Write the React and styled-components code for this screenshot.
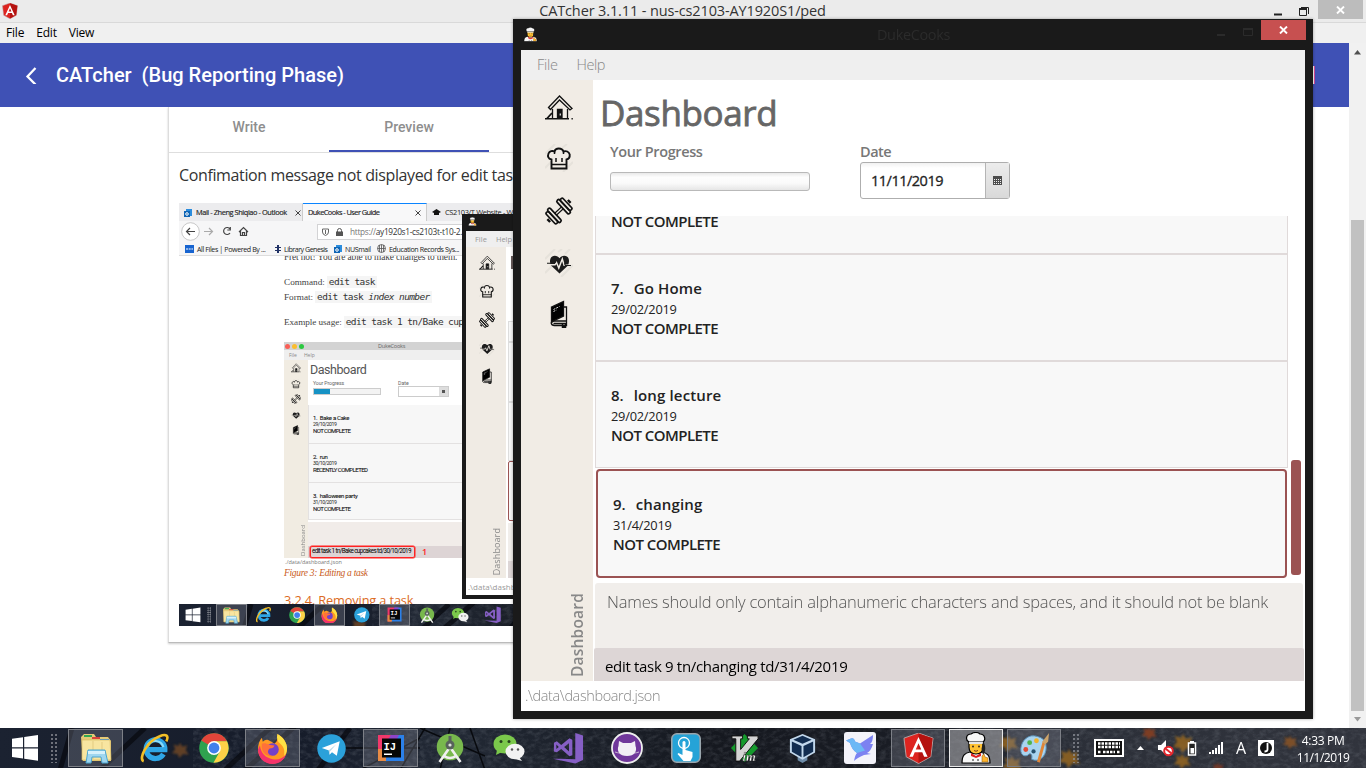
import React from 'react';
import styled, { createGlobalStyle, css } from 'styled-components';

const Global = createGlobalStyle`
  * { box-sizing: border-box; }
  body { margin: 0; overflow: hidden; background: #fff; }
  svg { display: block; flex: none; }
`;

const sans = "'Open Sans', 'Noto Sans', sans-serif";
const roboto = 'Roboto, sans-serif';
const serif = "'Liberation Serif', serif";

const Text = styled.span`
  display: block;
  white-space: pre;
  font-family: ${(p) => p.$font || sans};
  font-size: ${(p) => p.$size}px;
  font-weight: ${(p) => p.$weight || 400};
  font-style: ${(p) => p.$style || 'normal'};
  letter-spacing: ${(p) => p.$track || 0}px;
  line-height: ${(p) => p.$line || 20}px;
  color: ${(p) => p.$color || '#222'};
  -webkit-text-stroke: ${(p) => p.$stroke || 0}px currentColor;
  margin-left: ${(p) => p.$left || 0}px;
`;

/* ---------- icons ---------- */

const HouseIcon = ({ size = 28 }) => (
  <svg width={size} height={size} viewBox="0 0 28 28" fill="none" stroke="#111" strokeWidth="1.3">
    <path d="M3.500 13.500 14.500 2 27 14.500 25 16 14.500 6 5.500 15.500z" />
    <path d="M7.500 15v9.500M22.500 15v9.500" />
    <path d="M0 24.800h24M26.500 24.800h1.300" strokeWidth="1.6" />
    <path d="M12.500 24V15.500h4.500V24z" fill="#111" />
    <path d="M2 24.500l5-5.500" strokeWidth="1.800" />
    <path d="M15.300 19.500v2" stroke="#ddd" />
  </svg>
);

const HatIcon = ({ size = 28 }) => (
  <svg width={size} height={size} viewBox="0 0 28 28" fill="none">
    <path d="M0 10 10 0M0 24 7 17M18 28 28 18M17 4l5-4" stroke="#e6e2db" strokeWidth="2" />
    <path d="M6.500 24.500v-9C3 15 2.500 12 3.500 9.500 4.500 7 7.500 6.500 9.500 7.500 10.500 3.500 17 3.500 18.500 7.500 21 6.500 24 7.500 24.700 10.500 25 13.500 23.500 15 21.500 15.500v9z" stroke="#111" strokeWidth="1.9" />
    <path d="M6.500 20.500h15M11 14v4M17 14v4M9.500 7.500v2.500M18.500 7.500v2.500" stroke="#111" strokeWidth="1.5" />
  </svg>
);

const DumbbellIcon = ({ size = 28 }) => (
  <svg width={size} height={size} viewBox="0 0 28 28" fill="none" stroke="#111" strokeWidth="1.700">
    <g transform="rotate(-43 14 14)">
      <path d="M9 12.700h10M9 15.300h10" strokeWidth="1.300" />
      <rect x="6" y="5" width="3.400" height="18" rx="1.500" />
      <rect x="2.500" y="6.500" width="3.400" height="15" rx="1.500" />
      <rect x="18.600" y="5" width="3.400" height="18" rx="1.500" />
      <rect x="22.100" y="6.500" width="3.400" height="15" rx="1.500" />
      <path d="M0 12v4M28 12v4" strokeWidth="2.400" />
    </g>
  </svg>
);

const HeartIcon = ({ size = 28 }) => (
  <svg width={size} height={size} viewBox="0 0 28 28" fill="none">
    <path d="M0 10 10 0M0 24 7 17M13 3l4-3M16 28 28 16M20 5l5-5" stroke="#e6e2db" strokeWidth="2" />
    <path d="M14.500 24.500 6 16.500C3.500 11 6 6.800 9.800 6.800c2 0 3.700 1 4.700 2.400C15.500 7.800 17.200 6.800 19.300 6.800c4 0 6.200 4.200 3.700 9.700z" fill="#1c1c1c" />
    <path d="M4 15.800h6l1.500-2.300 2.300 5.500 3.500-9 1.800 6.300h5.500" stroke="#f1ece5" strokeWidth="1.500" />
    <path d="M2 14.300h7.500l1.500-2M19.500 14.300l.8 2.200H26" stroke="#1c1c1c" strokeWidth="1.100" />
  </svg>
);

const BookIcon = ({ size = 28 }) => (
  <svg width={size} height={size} viewBox="0 0 28 28" fill="none" stroke="#111" strokeWidth="1.300">
    <path d="M6.500 7 18.500 1.500v14.500L8.500 21 6.500 22.500z" fill="#000" />
    <path d="M18.500 7H21.500v18.500H9.500c-4 0-4-4-1-4.500h13M8.500 23.500h13" />
    <path d="M17.500 23v5l1.500-1.500 1.500 1.500v-5" strokeWidth="1.500" />
    <path d="M8.500 9.500l6-3M8.500 11.500l3-1.500" stroke="#ddd" strokeDasharray="2 1" strokeWidth="1" />
  </svg>
);

const AngularIcon = ({ size = 32 }) => (
  <svg width={size} height={size} viewBox="0 0 32 32">
    <path d="M16 0 31 5.300 28.700 24.500 16 31.500 3.300 24.500 1 5.300z" fill="#dd2420" stroke="#b9a3a3" strokeWidth="1" />
    <path d="M16 .5 30.500 5.500 28.300 24.200 16 31z" fill="#b5120f" />
    <path d="M16 4 6.600 24.500h3.600l1.900-4.600h7.800l1.900 4.600h3.600zM16 10.500l2.800 6.500h-5.600z" fill="#fff" fillRule="evenodd" />
  </svg>
);

const ChefIcon = ({ size = 32 }) => (
  <svg width={size} height={size} viewBox="0 0 32 32">
    <g stroke="#000" strokeWidth="1.200">
      <path d="M2 31c0-8 3-10 8-11h12c5 1 8 3 8 11z" fill="#f8f8f8" />
      <path d="M9 9h14v6c0 5-3 7-7 7s-7-2-7-7z" fill="#ffc233" />
      <path d="M9 10C5 8 6 2 11 2c3-2 7-2 9 0 5 0 6 6 3 8z" fill="#f7f7f7" />
    </g>
    <path d="M9 10h14v2H9z" fill="#e6e6e6" />
    <path d="M23 10c3 3 3 9 0 13l-1.500-6z" fill="#222" />
    <circle cx="13" cy="14.500" r="1" fill="#3b2b20" /><circle cx="19" cy="14.500" r="1" fill="#3b2b20" />
    <path d="M14 18.500q2 1.500 4 0" stroke="#7a3b1a" fill="none" />
    <path d="M11 21l5 3 5-3v3l-5 2-5-2z" fill="#e02020" />
    <circle cx="13" cy="28" r=".8" /><circle cx="18" cy="28" r=".8" />
    <path d="M22 24l2-2 1 3 3 1v4h-6z" fill="#ffb52e" stroke="#8a5a10" strokeWidth=".5" />
  </svg>
);

const WindowsIcon = ({ size = 28 }) => (
  <svg width={size} height={size} viewBox="0 0 28 28" fill="#fff">
    <path d="M1 4.800 12 3.200V13.200H1zM13.200 3 27 1V13.200H13.200zM1 14.600H12V24.600L1 23zM13.200 14.600H27V26.800L13.200 24.800z" />
  </svg>
);

const ExplorerIcon = ({ size = 34 }) => (
  <svg width={size} height={size} viewBox="0 0 34 34">
    <path d="M2 6l3-3h10l2 3h12l3 4v20H4z" fill="#e5ca76" />
    <rect x="5" y="4" width="8" height="2" fill="#33a852" /><rect x="13" y="6" width="8" height="2" fill="#d9453d" /><rect x="21" y="8" width="9" height="2" fill="#2f87dc" />
    <path d="M3 9h28l1 20H3z" fill="#f8e5a0" stroke="#d8bb66" strokeWidth=".7" />
    <path d="M14 10v18M23 11v17" stroke="#e3cb81" />
    <path d="M7 32l2-13h17l3 13h-6l-1-6H13l-1 6z" fill="#9fd6ef" stroke="#4ba5cf" strokeWidth="1" />
    <path d="M9 20h17v3H9z" fill="#d6f1fb" />
  </svg>
);

const IeIcon = ({ size = 34 }) => (
  <svg width={size} height={size} viewBox="0 0 34 34" fill="none">
    <path d="M9 18.800h18.500A10 10 0 1 0 26 23.500" stroke="#2fa6e6" strokeWidth="5.500" />
    <path d="M26 16A9.500 9.500 0 0 0 9 14" stroke="#8bdcfa" strokeWidth="2.200" />
    <path d="M5 31C-1 29 8 10 22 4.500 29 1.500 32 4 29 10" stroke="#f3bf27" strokeWidth="2.800" />
  </svg>
);

const ChromeIcon = ({ size = 30 }) => (
  <svg width={size} height={size} viewBox="0 0 30 30">
    <circle cx="15" cy="15" r="14.800" fill="#2fa24f" />
    <path d="M15 15 2.200 7.500A14.800 14.800 0 0 1 28 8.300H15z" fill="#e2453a" />
    <path d="M15 15V8.300H28A14.800 14.800 0 0 1 14.500 29.800L21 18z" fill="#fdd147" />
    <circle cx="15" cy="15" r="6.900" fill="#fff" /><circle cx="15" cy="15" r="5.400" fill="#4280ec" />
  </svg>
);

const FirefoxIcon = ({ size = 32 }) => (
  <svg width={size} height={size} viewBox="0 0 32 32">
    <path d="M21 1c6 3 10 9 10 15a15 15 0 0 1-30 1c0-5 1.500-9 4-12l1 4c2-2 4-2 5-2l4 2 3 2c3-2 4-6 3-10z" fill="#ff9a22" />
    <path d="M21 1c6 3 10 9 10 15 0 4-2 7-3 8 1-8-1-10-4-13-3-2-4-6-3-10z" fill="#ffe144" />
    <path d="M1 17c0 8 6 15 15 15 7 0 12-4 14-10-4 5-9 6-14 5-7-1-12-6-13-14z" fill="#f4336b" />
    <circle cx="16" cy="17" r="6.500" fill="#7440c9" />
    <path d="M5 11c3-1 5 0 7 1l6 1c-1 3-3 3-5 3-3 3-2 6 3 8-7 0-12-4-11-13z" fill="#ff7139" />
  </svg>
);

const TelegramIcon = ({ size = 29 }) => (
  <svg width={size} height={size} viewBox="0 0 30 30">
    <circle cx="15" cy="15" r="14.700" fill="#2ba1da" />
    <path d="M5 14.500 23.500 7.500 20.500 22.500 15.500 18.800 13 21.500 12.400 17z" fill="#fff" />
    <path d="M12 17 20 10.500 13.500 18 13 21.500z" fill="#b9d9ea" />
  </svg>
);

const IntellijIcon = ({ size = 28 }) => (
  <svg width={size} height={size} viewBox="0 0 28 28">
    <path d="M1 1h13L8 27H1z" fill="#f1386b" /><path d="M14 1h13v26H8z" fill="#2b80e9" /><path d="M1 15h8v12H1z" fill="#e78b45" /><path d="M14 1h8l-3 6h-9z" fill="#8e44c9" />
    <rect x="5" y="4.500" width="19" height="19" fill="#060606" />
    <text x="6.500" y="15.500" fontFamily="Liberation Mono, monospace" fontWeight="700" fontSize="10.500" fill="#fff">IJ</text>
    <rect x="7" y="19.500" width="8" height="1.500" fill="#fff" />
  </svg>
);

const StudioIcon = ({ size = 30 }) => (
  <svg width={size} height={size} viewBox="0 0 30 30" fill="none">
    <circle cx="15" cy="14" r="13.300" fill="#78b84d" />
    <path d="M4.500 29 15 14 25.500 29M9 23q6 4 12 0" stroke="#f0f0f0" strokeWidth="2.600" />
    <circle cx="15" cy="12" r="4.500" fill="#58625c" /><circle cx="15" cy="12" r="1.600" fill="#dfe6df" /><path d="M15 3v5" stroke="#58625c" strokeWidth="3" />
  </svg>
);

const WechatIcon = ({ size = 34 }) => (
  <svg width={size} height={size} viewBox="0 0 34 34">
    <ellipse cx="13" cy="13" rx="11.500" ry="9.500" fill="#7bc84b" /><path d="M5 19l-1 5 6-3z" fill="#7bc84b" />
    <ellipse cx="23" cy="20.500" rx="9.500" ry="7.800" fill="#f2f2f2" /><path d="M27 26l3 4-7-2z" fill="#f2f2f2" />
    <circle cx="9" cy="10.500" r="1.500" fill="#26401c" /><circle cx="17" cy="10.500" r="1.500" fill="#26401c" /><circle cx="20" cy="18.500" r="1.200" fill="#555" /><circle cx="26" cy="18.500" r="1.200" fill="#555" />
  </svg>
);

const VisualStudioIcon = ({ size = 33 }) => (
  <svg width={size} height={size} viewBox="0 0 33 33">
    <path d="M24 1 32 3.500V29L24 32.500 1 27.500 24 28z" fill="#865fc5" />
    <path d="M2 11l3-1.500 4.500 4 8.500-7 3 1.500v16l-3 1-8.500-7.500L5 21l-3-1zM4.500 13v4.500L7 15.500zM17.500 11.500 12.500 15.500l5 4.500z" fill="#865fc5" fillRule="evenodd" />
  </svg>
);

const GithubIcon = ({ size = 32 }) => (
  <svg width={size} height={size} viewBox="0 0 32 32">
    <circle cx="16" cy="16" r="15" fill="#70379b" stroke="#eee" strokeWidth="1.800" />
    <path d="M8 9l4 2h8l4-2 .5 5c2 5-1 10-8.500 10S5.500 19 7.500 14z" fill="#f2eef5" />
    <path d="M4 20q3 1 5 1M28 20q-3 1-5 1" stroke="#f2eef5" strokeWidth=".7" />
  </svg>
);

const TouchIcon = ({ size = 30 }) => (
  <svg width={size} height={size} viewBox="0 0 30 30">
    <rect x=".8" y=".8" width="28.400" height="28.400" rx="5" fill="#25a3d7" stroke="#9aa6ad" strokeWidth="1.600" />
    <circle cx="13" cy="10" r="5.500" fill="none" stroke="#fff" strokeWidth="1.300" />
    <path d="M11.500 9q1.500-2 3 0v8l7 2v5l-2 4h-7l-6-7 1-1 4 2z" fill="#fff" />
  </svg>
);

const VimIcon = ({ size = 32 }) => (
  <svg width={size} height={size} viewBox="0 0 32 32">
    <path d="M16 1 30 15.500 16 30 2 15.500z" fill="#159a2c" />
    <path d="M3 3h11v3h-2v11L21 6h-2V3h11v3L11 29H7V6H3z" fill="#d5d5d5" stroke="#111" strokeWidth="1" />
    <text x="14" y="29" fontFamily="Liberation Serif, serif" fontStyle="italic" fontWeight="700" fontSize="13" fill="#fff" stroke="#222" strokeWidth=".4">im</text>
  </svg>
);

const VboxIcon = ({ size = 32 }) => (
  <svg width={size} height={size} viewBox="0 0 32 32">
    <path d="M11 24h10v4l-5 3-5-3z" fill="#6d8ba8" />
    <path d="M16 1 29 6.500V20L16 27.500 3 20V6.500z" fill="#c2d8ec" />
    <path d="M16 2.800 25.500 7 16 11.200 6.500 7zM5 8.800l10 4.500V25L5 19.300zM27 8.800l-10 4.500V25l10-5.700z" fill="#122d50" />
  </svg>
);

const BirdIcon = ({ size = 32 }) => (
  <svg width={size} height={size} viewBox="0 0 32 32">
    <rect width="32" height="32" rx="3" fill="#f3f3fa" />
    <path d="M2 8.500 7 6.500q3-1 4 3l5 2L29 3q0 7-3 9h3q-2 7-6 9l4 1-7 1q-7 3-10 6 1-6 3-8-5-3-7-10z" fill="#7c82f1" />
    <path d="M2 8.500 7 6.500q3-1 4 3l5 2 5 7-8 2.500q-5-3-7-10z" fill="#6cb8f5" />
  </svg>
);

const PaintIcon = ({ size = 34 }) => (
  <svg width={size} height={size} viewBox="0 0 34 34">
    <path d="M17 4C8 3 2 12 3 20c1 6 7 5 8 3 3-2 4 2 3 5 8 4 15-3 15-12S23 5 17 4z" fill="#a9d4ef" stroke="#5d95bc" />
    <circle cx="8" cy="18" r="2.500" fill="#e24b35" /><circle cx="12" cy="11" r="2.500" fill="#4fb44d" /><circle cx="19" cy="9" r="2.500" fill="#f0b32c" /><circle cx="16" cy="20" r="2.200" fill="#26526f" />
    <path d="M21 31 27 10" stroke="#df8638" strokeWidth="3" /><path d="M25 10 32 1l-1 9-3 3z" fill="#cda46a" />
  </svg>
);

/* ---------- taskbar ---------- */

const Bar = styled.div`
  position: relative;
  z-index: 0;
  flex: none;
  height: ${(p) => p.$h}px;
  display: flex;
  align-items: center;
  overflow: hidden;
  background: linear-gradient(90deg, #1b2231 0%, #161c2a 22%, #222935 33%, #15181f 52%, #1a1d25 68%, #2b2f38 77%, #31343d 100%);
`;

const BarArt = styled.svg`
  position: absolute;
  inset: 0;
  z-index: -1;
  width: 1366px;
  height: 40px;
`;

const Leaf = ({ x, y, s = 1, c = '#94651f' }) => (
  <path transform={`translate(${x} ${y}) scale(${s})`} fill={c} opacity=".85" d="M0-9 3-4 9-6 7 0 11 6 4 5-1 10-3 5-10 4-6-1-8-7-2-5z" />
);

const Backdrop = () => (
  <BarArt viewBox="0 0 1366 40" fill="none">
    <filter id="rock"><feTurbulence type="fractalNoise" baseFrequency=".15 .25" numOctaves="4" seed="4" /><feColorMatrix values="0 0 0 0 .5  0 0 0 0 .54  0 0 0 0 .6  1.200 0 0 0 -.48" /></filter>
    <filter id="soft"><feGaussianBlur stdDeviation=".8" /></filter>
    <rect x="300" width="1066" height="40" filter="url(#rock)" opacity=".28" />
    <g stroke="#07090e" strokeWidth="5" opacity=".7"><path d="M100 42 145 0M225 42 270 0M245 42 300-6M60 42 72 0M318 42 350 0" /></g>
    <g stroke="#080a0e" strokeWidth="1.500"><path d="M345 20h75M400 42 425 0M440 42 450 0M470 0 485 42M360 42 420 10M420 0l65 28" /></g>
    <g filter="url(#soft)">
      <Leaf x={180} y={22} c="#6d4726" s=".8" />
      <Leaf x={1008} y={15} s=".9" /><Leaf x={1012} y={36} s=".9" /><Leaf x={1069} y={30} /><Leaf x={1149} y={5} s=".7" c="#8b3f22" /><Leaf x={1183} y={15} /><Leaf x={1182} y={33} s=".8" /><Leaf x={1290} y={14} s=".7" c="#8a5323" /><Leaf x={1218} y={40} s=".6" c="#7b3826" />
    </g>
  </BarArt>
);

const StartCell = styled.div`
  flex: none;
  width: ${(p) => p.$w}px;
  display: flex;
  justify-content: center;
`;

const Grip = styled.div`
  flex: none;
  width: ${(p) => p.$w}px;
  height: ${(p) => p.$h}px;
  margin-left: ${(p) => p.$left || 0}px;
  background: radial-gradient(circle, #8d9098 .6px, transparent 1px) 0 0 / ${(p) => p.$step}px ${(p) => p.$step}px;
`;

const Apps = styled.div`
  flex: none;
  display: flex;
  gap: ${(p) => p.$gap}px;
  margin-left: ${(p) => p.$left}px;
`;

const AppSlot = styled.div`
  flex: none;
  width: ${(p) => p.$w}px;
  height: ${(p) => p.$h}px;
  display: flex;
  align-items: center;
  justify-content: center;
  border: 1px solid ${(p) => (p.$state === 'active' ? '#e8e8e8' : p.$state ? '#7d8087' : 'transparent')};
  background: ${(p) => (p.$state === 'active' ? '#a8a9ac99' : p.$state ? '#8d92a04d' : 'none')};
`;

const apps = [
  [ExplorerIcon, 'open', 34], [IeIcon, '', 32], [ChromeIcon, '', 30], [FirefoxIcon, 'open', 31],
  [TelegramIcon, '', 29], [IntellijIcon, 'open', 28], [StudioIcon, '', 30], [WechatIcon, '', 34],
  [VisualStudioIcon, '', 32], [GithubIcon, '', 32], [TouchIcon, '', 30], [VimIcon, '', 31],
  [VboxIcon, '', 31], [BirdIcon, '', 32], [AngularIcon, 'open', 31], [ChefIcon, 'active', 32], [PaintIcon, 'open', 33],
];

const Tray = styled.div`
  flex: none;
  display: flex;
  align-items: center;
  margin-left: 14px;
  gap: 12px;
`;

const Clock = styled.div`
  width: 60px;
  margin-left: 7px;
  padding-top: 2px;
  display: flex;
  flex-direction: column;
  align-items: center;
`;

const Taskbar = () => (
  <Bar $h={40}>
    <Backdrop />
    <StartCell $w={50}><WindowsIcon /></StartCell>
    <Grip $w={8} $h={30} $step={4} />
    <Apps $gap={4} $left={10}>
      {apps.map(([Icon, state, size], i) => (
        <AppSlot key={i} $w={i > 10 ? 54 : 55} $h={38} $state={state}><Icon size={size} /></AppSlot>
      ))}
    </Apps>
    <Grip $w={8} $h={30} $step={4} $left={11} />
    <Tray>
      <svg width="30" height="18" viewBox="0 0 30 18"><rect x="1" y="1" width="28" height="16" fill="#111" stroke="#fff" strokeWidth="2" /><path d="M4 4.500h22M4 8h22M4 13h3M9 13h12M23 13h3" stroke="#fff" strokeWidth="2.500" strokeDasharray="2.500 1" /></svg>
      <svg width="9" height="6" viewBox="0 0 9 6"><path d="M1 5h7L4.500 1z" fill="#fff" /></svg>
      <svg width="18" height="18" viewBox="0 0 18 18"><path d="M1 6h3l5-5v15l-5-5H1z" fill="#fff" /><circle cx="11.500" cy="12" r="4.300" fill="#fff" stroke="#e4262c" strokeWidth="2" /><path d="M8.500 9.500l6 5" stroke="#e4262c" strokeWidth="2" /></svg>
      <svg width="10" height="16" viewBox="0 0 10 16"><rect x="1.500" y="3" width="7" height="12" fill="#222" stroke="#fff" strokeWidth="1.500" /><path d="M3 1h4v2H3zM3.500 8h3.500v5.500H3.500z" fill="#fff" /></svg>
      <svg width="15" height="13" viewBox="0 0 15 13" fill="#fff"><path d="M0 10h2v2H0zM3 8h2v4H3zM6 6h2v6H6zM9 3h2v9H9zM12 0h2v12h-2z" /></svg>
      <Text $size={16} $color="#fff" $line={22}>A</Text>
      <svg width="16" height="16" viewBox="0 0 16 16"><rect width="16" height="16" fill="#fff" /><circle cx="8" cy="8" r="6" fill="#111" /><path d="M9.500 3v6.500q0 2-3 2" stroke="#fff" strokeWidth="1.800" fill="none" /></svg>
      <Clock>
        <Text $size={12} $track={-0.3} $color="#fff" $line={17}>4:33 PM</Text>
        <Text $size={12} $track={-0.45} $color="#fff" $line={17}>11/1/2019</Text>
      </Clock>
    </Tray>
  </Bar>
);

/* ---------- CATcher window ---------- */

const Desktop = styled.div`
  position: relative;
  width: 1366px;
  height: 768px;
  overflow: hidden;
  display: flex;
  flex-direction: column;
  background: #fff;
`;

const TitleBar = styled.div`
  flex: none;
  height: 23px;
  display: flex;
  align-items: center;
  justify-content: space-between;
  background: #ebebeb;
  border-bottom: 1px solid #d9d9d9;
  padding: 0 3px 0 2px;
`;

const WindowControls = styled.div`
  display: flex;
  align-self: flex-start;
  align-items: center;
  gap: ${(p) => p.$gap}px;
`;

const CloseButton = styled.div`
  width: 45px;
  height: ${(p) => p.$h}px;
  display: flex;
  align-items: center;
  justify-content: center;
  background: ${(p) => p.$bg};
`;

const Cross = () => <svg width="9" height="8" viewBox="0 0 9 8"><path d="M1 .5 8 7.500M8 .5 1 7.500" stroke="#fff" strokeWidth="1.900" /></svg>;

const MenuBar = styled.div`
  flex: none;
  height: 20px;
  display: flex;
  gap: 12px;
  padding-left: 6px;
  background: #f0f0f0;
`;

const Work = styled.div`
  height: 685px;
  display: flex;
`;

const Page = styled.div`
  width: 1349px;
  display: flex;
  flex-direction: column;
`;

const AppHeader = styled.header`
  flex: none;
  height: 64px;
  display: flex;
  align-items: center;
  justify-content: space-between;
  padding: 0 34px 0 24px;
  background: #3f51b5;
`;

const HeaderLeft = styled.div`
  display: flex;
  align-items: center;
  gap: 18px;
`;

const HeaderMark = styled.div`
  width: 10px;
  height: 18px;
  border-right: 1px solid #d54a9b;
  background: #fff;
`;

const EditorCard = styled.main`
  width: 1010px;
  height: 536px;
  margin-left: 168px;
  border: 1px solid #ddd;
  border-top: 0;
  border-bottom-color: #bbb;
  box-shadow: 0 1px 2px #0003;
  background: #fff;
`;

const Tabs = styled.div`
  height: 46px;
  display: flex;
  border-bottom: 1px solid #dedede;
`;

const Tab = styled.div`
  width: 160px;
  height: 45px;
  padding-top: 10px;
  text-align: center;
  border-bottom: 2px solid ${(p) => (p.$on ? '#3f51b5' : 'transparent')};
`;

const Body = styled.div`
  padding: 11px 10px 0;
`;

const VScroll = styled.div`
  width: 17px;
  display: flex;
  flex-direction: column;
  align-items: center;
  padding-top: 7px;
  background: #f1f1f1;
`;

const VThumb = styled.div`
  width: 13px;
  height: 491px;
  margin: 165px 0 6px;
  background: #c1c1c1;
`;

/* ---------- embedded browser capture ---------- */

const Capture = styled.div`
  position: relative;
  width: 752px;
  height: 423px;
  margin-top: 16px;
  overflow: hidden;
  display: flex;
  flex-direction: column;
  background: #fff;
`;

const BrowserTabs = styled.div`
  flex: none;
  height: 18px;
  display: flex;
  background: #ececee;
`;

const BrowserTab = styled.div`
  width: ${(p) => p.$w}px;
  display: flex;
  align-items: center;
  gap: 4px;
  padding: 0 5px;
  border-top: 1px solid ${(p) => (p.$on ? '#0a84ff' : 'transparent')};
  border-right: 1px solid #ccc;
  background: ${(p) => (p.$on ? '#f8f8f9' : 'none')};
`;

const Push = styled.div`flex: 1;`;

const NavRow = styled.div`
  flex: none;
  height: 21px;
  display: flex;
  align-items: center;
  background: #f6f6f7;
  padding: 0 2px;
`;

const Address = styled.div`
  width: 350px;
  height: 16px;
  display: flex;
  align-items: center;
  gap: 7px;
  margin-left: 64px;
  padding-left: 4px;
  border: 1px solid #d3d3d5;
  background: #fff;
`;

const Host = styled.span`color: #333;`;

const Bookmarks = styled.div`
  flex: none;
  height: 14px;
  display: flex;
  align-items: center;
  gap: 4px;
  padding-left: 6px;
  background: #f6f6f7;
  border-bottom: 1px solid #ddd;
`;

const Bookmark = styled.div`
  display: flex;
  align-items: center;
  gap: 3px;
  width: ${(p) => p.$w}px;
`;

const Guide = styled.div`
  flex: 1;
  min-height: 0;
  overflow: hidden;
  padding-left: 105px;
`;

const GuideLine = styled.div`
  height: ${(p) => p.$h}px;
  display: flex;
  align-items: ${(p) => p.$align || 'center'};
  gap: 2px;
`;

const Code = styled.code`
  white-space: pre;
  padding: 0 2px;
  background: #f5f5f5;
  color: #333;
  font: 9.500px/12px 'DejaVu Sans Mono', monospace;
  letter-spacing: -.6px;
`;

const OutlookMark = () => <svg width="8" height="8" viewBox="0 0 8 8"><rect x="2" width="6" height="7" fill="#2b8cdd" /><rect y="2" width="6" height="6" fill="#0f65b5" /><circle cx="3" cy="5" r="1.300" fill="none" stroke="#fff" /></svg>;

const TabClose = () => <svg width="6" height="6" viewBox="0 0 6 6"><path d="M.5.5l5 5M5.500.500l-5 5" stroke="#444" /></svg>;

const MacWindow = styled.div`
  width: 360px;
  height: 216px;
  display: flex;
  flex-direction: column;
  background: #fff;
`;

const MacTitle = styled.div`
  flex: none;
  height: 8px;
  display: flex;
  align-items: center;
  gap: 2px;
  padding-left: 1px;
  background: #d3d3d3;
`;

const Light = styled.i`
  width: 5px;
  height: 5px;
  border-radius: 50%;
  background: ${(p) => p.$c};
`;

const MacMenu = styled.div`
  flex: none;
  height: 10px;
  display: flex;
  gap: 7px;
  padding-left: 5px;
  background: #efefef;
`;

const MacBody = styled.div`
  flex: 1;
  display: flex;
  min-height: 0;
`;

const MacSide = styled.div`
  flex: none;
  width: 24px;
  display: flex;
  flex-direction: column;
  align-items: center;
  gap: 5.500px;
  padding-top: 3px;
  background: #f1ece2;
`;

const Vertical = styled.span`
  writing-mode: vertical-rl;
  transform: rotate(180deg);
  align-self: flex-end;
  margin-top: auto;
  margin-right: ${(p) => p.$right || 0}px;
  margin-bottom: ${(p) => p.$bottom || 0}px;
  font-family: ${sans};
  font-size: ${(p) => p.$size}px;
  font-weight: ${(p) => p.$weight || 400};
  line-height: 1.200;
  letter-spacing: ${(p) => p.$track || 0}px;
  color: #888;
`;

const MacMain = styled.div`
  flex: 1;
  display: flex;
  flex-direction: column;
`;

const MacHead = styled.div`
  height: 45px;
  padding-left: 2px;
`;

const MacFields = styled.div`
  display: flex;
  gap: 17px;
  padding-left: 3px;
`;

const MacField = styled.div`
  width: ${(p) => p.$w}px;
`;

const MacProgress = styled.div`
  height: 7px;
  margin-top: 2px;
  border: 1px solid #ccc;
  background: linear-gradient(90deg, #1792c4 16px, #f3f3f3 16px);
`;

const MacDate = styled.div`
  height: 11px;
  display: flex;
  justify-content: flex-end;
  border: 1px solid #ccc;
`;

const MacDateButton = styled.div`
  width: 9px;
  display: grid;
  place-items: center;
  background: #ddd;
`;

const MacRow = styled.div`
  height: ${(p) => p.$h}px;
  padding: 9px 4px 0;
  border: 1px solid #e3e1e1;
  border-width: 0 0 1px 1px;
  background: #f7f7f7;
`;

const MacResult = styled.div`
  height: 24px;
  margin-top: 2px;
  background: #f1ece9;
`;

const MacCommand = styled.div`
  flex: 1;
  display: flex;
  gap: 7px;
  align-items: center;
  padding-left: 2px;
  background: #ddd4d5;
`;

const RedBox = styled.div`
  width: 105px;
  height: 12px;
  padding-left: 1px;
  border: 1px solid #f22;
  border-radius: 2px;
  box-shadow: 0 0 0 .5px #f22;
`;

const macTasks = [
  ['1.  Bake a Cake', '29/10/2019', 'NOT COMPLETE', 39],
  ['2.  run', '30/10/2019', 'RECENTLY COMPLETED', 39],
  ['3.  halloween party', '31/10/2019', 'NOT COMPLETE', 37],
];

const sideIcons = [HouseIcon, HatIcon, DumbbellIcon, HeartIcon, BookIcon];

const MacShot = () => (
  <MacWindow>
    <MacTitle>
      <Light $c="#f95f57" /><Light $c="#fbbd2e" /><Light $c="#2bc840" />
      <Text $size={5.5} $line={7} $left={72} $track={-0.2} $color="#666">DukeCooks</Text>
    </MacTitle>
    <MacMenu><Text $size={5} $line={10} $color="#888">File</Text><Text $size={5} $line={10} $color="#888">Help</Text></MacMenu>
    <MacBody>
      <MacSide>
        {sideIcons.map((Icon, i) => <Icon key={i} size={10} />)}
        <Vertical $size={6} $right={1} $bottom={2}>Dashboard</Vertical>
      </MacSide>
      <MacMain>
        <MacHead>
          <Text $font={roboto} $size={12.5} $line={20} $track={-0.45} $color="#555">Dashboard</Text>
          <MacFields>
            <MacField $w={68}><Text $font={roboto} $size={5.2} $line={6} $track={-0.1} $color="#666">Your Progress</Text><MacProgress /></MacField>
            <MacField $w={51}><Text $font={roboto} $size={5.2} $line={6} $color="#666">Date</Text><MacDate><MacDateButton><svg width="3" height="3"><rect width="3" height="3" fill="#555" /></svg></MacDateButton></MacDate></MacField>
          </MacFields>
        </MacHead>
        {macTasks.map(([name, date, status, h]) => (
          <MacRow key={name} $h={h}>
            <Text $font={roboto} $size={6} $line={7} $track={-0.3} $stroke={0.1}>{name}</Text>
            <Text $font={roboto} $size={5.2} $line={6} $track={-0.42}>{date}</Text>
            <Text $font={roboto} $size={6} $line={7} $track={-0.56} $stroke={0.1}>{status}</Text>
          </MacRow>
        ))}
        <MacResult />
        <MacCommand><RedBox><Text $font={roboto} $size={6.3} $line={9} $track={-0.6} $color="#000">edit task 1 tn/Bake cupcakes td/30/10/2019</Text></RedBox><Text $size={9} $line={10} $weight={600} $color="#f22">1</Text></MacCommand>
      </MacMain>
    </MacBody>
  </MacWindow>
);

const MiniWindow = styled.div`
  position: absolute;
  left: 283px;
  top: 11px;
  width: 446px;
  height: 385px;
  display: flex;
  flex-direction: column;
  border: 4px solid #1a1a1a;
  border-top: 0;
  background: #fff;
`;

const MiniTitle = styled.div`
  height: 17px;
  padding: 3px 2px;
  background: #1a1a1a;
`;

const MiniMenu = styled.div`
  height: 16px;
  display: flex;
  gap: 9px;
  padding-left: 9px;
  background: #efefef;
`;

const MiniBody = styled.div`
  flex: 1;
  display: flex;
`;

const MiniSide = styled.div`
  width: 40px;
  display: flex;
  flex-direction: column;
  align-items: center;
  gap: 12.300px;
  padding: 8px 0 0 2px;
  background: #f0ebe4;
`;

const MiniMain = styled.div`
  flex: 1;
  display: flex;
  flex-direction: column;
  padding-left: 2px;
`;

const MiniHeading = styled.div`
  height: 74px;
  padding: 9px 0 0 2px;
`;

const MiniCard = styled.div`
  height: ${(p) => p.$h}px;
  background: #f7f7f7;
  border: 1px solid ${(p) => (p.$on ? '#9b5353' : '#ddd')};
  border-radius: ${(p) => (p.$on ? 2 : 0)}px;
`;

const MiniFoot = styled.div`
  flex: 1;
  margin-top: 2px;
  background: linear-gradient(#f1eeeb 38px, #ddd6d6 38px);
`;

const MiniDuke = () => (
  <MiniWindow>
    <MiniTitle><ChefIcon size={9} /></MiniTitle>
    <MiniMenu><Text $size={7.5} $line={16} $color="#999">File</Text><Text $size={7.5} $line={16} $color="#999">Help</Text></MiniMenu>
    <MiniBody>
      <MiniSide>
        {sideIcons.map((Icon, i) => <Icon key={i} size={16} />)}
        <Vertical $size={9} $right={3} $bottom={3} $track={0.1} $weight={500}>Dashboard</Vertical>
      </MiniSide>
      <MiniMain>
        <MiniHeading><svg width="10" height="13"><path d="M1 0h9v13H1z" fill="#675b5b" /></svg></MiniHeading>
        <MiniCard $h={21} /><MiniCard $h={60} /><MiniCard $h={59} /><MiniCard $h={60} $on />
        <MiniFoot />
      </MiniMain>
    </MiniBody>
    <Text $size={8} $line={17} $left={2} $color="#999">.\data\dashboard.json</Text>
  </MiniWindow>
);

const BrowserCapture = () => (
  <Capture>
    <BrowserTabs>
      <BrowserTab $w={124}><OutlookMark /><Text $size={7.4} $line={17} $track={-0.42} $stroke={0.15}>Mail - Zheng Shiqiao - Outlook</Text><Push /><TabClose /></BrowserTab>
      <BrowserTab $w={124} $on><Text $size={7.4} $line={17} $track={-0.55} $stroke={0.15}>DukeCooks - User Guide</Text><Push /><TabClose /></BrowserTab>
      <BrowserTab $w={124}><svg width="9" height="7" viewBox="0 0 9 7"><path d="M0 3 4.500 0 9 3 7 4v2H2V4z" fill="#111" /></svg><Text $size={7.4} $line={17} $track={-0.35}>CS2103/T Website - We</Text></BrowserTab>
    </BrowserTabs>
    <NavRow>
      <svg width="72" height="19" viewBox="0 0 72 19" fill="none" stroke="#444" strokeWidth="1.200">
        <circle cx="9.500" cy="9.500" r="8.800" fill="#fff" stroke="#bbb" strokeWidth=".8" />
        <path d="M14 9.500H5.500M9 6 5.500 9.500 9 13" /><path d="M23 9.500h8M28 6l3.500 3.500L28 13" stroke="#aaa" />
        <path d="M49 7A3.500 3.500 0 1 0 49 11M49.300 5v3h-3" /><path d="M58 10l4.500-4.500L67 10M59.500 9v4.500h6V9M61.500 13.500v-3h2v3" />
      </svg>
      <Address>
        <svg width="7" height="8" viewBox="0 0 7 8"><path d="M.5 1h6v3q0 2.500-3 3.500-3-1-3-3.500zM3.500 2v4" fill="none" stroke="#666" /></svg>
        <svg width="7" height="8" viewBox="0 0 7 8"><path d="M0 3.500h7V8H0z" fill="#555" /><path d="M1.500 4V2.500a2 2 0 0 1 4 0V4" fill="none" stroke="#555" /></svg>
        <Text $size={8.3} $line={14} $track={-0.32} $color="#777">https://<Host>ay1920s1-cs2103t-t10-2.</Host></Text>
      </Address>
    </NavRow>
    <Bookmarks>
      <Bookmark $w={86}>
        <svg width="9" height="8"><rect width="9" height="8" fill="#1764d0" /><path d="M1 4h7" stroke="#fff" strokeDasharray="2 .7" /></svg>
        <Text $size={7.1} $line={12} $track={-0.4}>All Files | Powered By ...</Text>
      </Bookmark>
      <Bookmark $w={55}>
        <svg width="6" height="8"><path d="M0 2h6v1H0zM0 5h6v1H0zM2 0h2v8H2z" fill="#236" /></svg>
        <Text $size={7.1} $line={12} $track={-0.5}>Library Genesis</Text>
      </Bookmark>
      <Bookmark $w={39}><OutlookMark /><Text $size={7.1} $line={12} $track={-0.4}>NUSmail</Text></Bookmark>
      <Bookmark $w={90}>
        <svg width="9" height="9" viewBox="0 0 9 9" fill="none" stroke="#555" strokeWidth=".8"><circle cx="4.500" cy="4.500" r="4" /><path d="M.5 4.500h8M4.500.500v8M2.500 1v7M6.500 1v7" /></svg>
        <Text $size={7.1} $line={12} $track={-0.4}>Education Records Sys...</Text>
      </Bookmark>
    </Bookmarks>
    <Guide>
      <GuideLine $h={15} $align="flex-start"><Text $font={serif} $size={9.4} $line={3} $track={-0.13} $color="#444">Fret not! You are able to make changes to them.</Text></GuideLine>
      <GuideLine $h={22}><Text $font={serif} $size={9.2} $color="#444">Command:</Text><Code>edit task</Code></GuideLine>
      <GuideLine $h={8}><Text $font={serif} $size={9.2} $color="#444">Format:</Text><Code>edit task <i>index number</i></Code></GuideLine>
      <GuideLine $h={41}><Text $font={serif} $size={9.2} $track={-0.05} $color="#444">Example usage:</Text><Code>edit task 1 tn/Bake cupcakes</Code></GuideLine>
      <MacShot />
      <Text $size={5.5} $line={9} $left={1} $color="#777">./data/dashboard.json</Text>
      <Text $font={serif} $style="italic" $size={9.5} $line={12} $track={-0.3} $color="#c95b20">Figure 3: Editing a task</Text>
      <GuideLine $h={41}><Text $size={12.8} $track={-0.15} $color="#dc6b24">3.2.4. Removing a task</Text></GuideLine>
    </Guide>
    <Bar $h={22}>
      <Backdrop />
      <StartCell $w={28}><WindowsIcon size={16} /></StartCell>
      <Grip $w={4} $h={16} $step={2.2} />
      <Apps $gap={2} $left={5}>
        {apps.slice(0, 12).map(([Icon, state, size], i) => (
          <AppSlot key={i} $w={30.7} $h={22} $state={state}><Icon size={size * 0.54} /></AppSlot>
        ))}
      </Apps>
    </Bar>
    <MiniDuke />
  </Capture>
);

const Catcher = () => (
  <>
    <TitleBar>
      <AngularIcon size={16} />
      <Text $size={14.5} $track={-0.13} $line={24} $left={73} $color="#333">CATcher 3.1.11 - nus-cs2103-AY1920S1/ped</Text>
      <WindowControls $gap={9}>
        <svg width="35" height="14" viewBox="0 0 35 14" fill="none" stroke="#222"><path d="M0 11.500h8" strokeWidth="2" /><path d="M25.500 5.500h7v7h-7zM27 4.500h7.500V11" /><path d="M25 6h8" strokeWidth="2" /></svg>
        <CloseButton $h={19} $bg="#bcbcbc"><Cross /></CloseButton>
      </WindowControls>
    </TitleBar>
    <MenuBar>
      {['File', 'Edit', 'View'].map((t) => <Text key={t} $size={12} $track={-0.2} $color="#000">{t}</Text>)}
    </MenuBar>
    <Work>
      <Page>
        <AppHeader>
          <HeaderLeft>
            <svg width="14" height="18" viewBox="0 0 14 18"><path d="M11.500 2 3.500 10.500l8 8" fill="none" stroke="#fff" strokeWidth="2.300" /></svg>
            <Text $font={roboto} $size={20} $weight={500} $line={24} $color="#fff">CATcher  (Bug Reporting Phase)</Text>
          </HeaderLeft>
          <HeaderMark />
        </AppHeader>
        <EditorCard>
          <Tabs>
            <Tab><Text $font={roboto} $size={14} $weight={500} $color="#8e8e8e">Write</Text></Tab>
            <Tab $on><Text $font={roboto} $size={14} $weight={500} $color="#8e8e8e">Preview</Text></Tab>
          </Tabs>
          <Body>
            <Text $size={16} $line={23} $track={-0.37} $color="#333">Confimation message not displayed for edit task</Text>
            <BrowserCapture />
          </Body>
        </EditorCard>
      </Page>
      <VScroll>
        <svg width="7" height="5"><path d="M0 4.500h7L3.500 0z" fill="#505050" /></svg>
        <VThumb />
        <svg width="7" height="5"><path d="M0 0h7L3.500 4.500z" fill="#999" /></svg>
      </VScroll>
    </Work>
  </>
);

/* ---------- DukeCooks window ---------- */

const DukeWindow = styled.section`
  position: absolute;
  left: 513px;
  top: 19px;
  width: 800px;
  height: 700px;
  display: flex;
  flex-direction: column;
  padding: 0 8px 8px;
  background: #1a1a1a;
  box-shadow: 0 0 3px #0005;
`;

const DukeTitle = styled.div`
  flex: none;
  height: 31px;
  display: flex;
  align-items: center;
  justify-content: space-between;
  padding-left: 2px;
  margin-right: -1px;
`;

const DukeControls = styled(WindowControls)`
  padding-top: 1px;
`;

const DukeMenu = styled.div`
  flex: none;
  height: 30px;
  display: flex;
  align-items: center;
  gap: 19px;
  padding-left: 16px;
  background: #efefef;
`;

const DukeBody = styled.div`
  height: 601px;
  display: flex;
  background: #fff;
`;

const Sidebar = styled.nav`
  width: 72px;
  display: flex;
  flex-direction: column;
  align-items: center;
  gap: 23.500px;
  padding: 14px 0 0 4px;
  background: #f1ece5;

  svg:nth-of-type(2) {
    margin: -2px 0 2px;
  }
`;

const Main = styled.div`
  flex: 1;
  display: flex;
  flex-direction: column;
`;

const Head = styled.div`
  height: 136px;
  padding: 8px 0 0 8px;
`;

const Fields = styled.div`
  display: flex;
  gap: 50px;
  padding: 5px 0 0 9px;
`;

const Field = styled.div`
  width: ${(p) => p.$w}px;
`;

const Progress = styled.div`
  height: 19px;
  margin-top: 11px;
  border: 1px solid #b9b9b9;
  border-radius: 3px;
  background: linear-gradient(#e9e9e9, #fdfdfd 25%, #fafafa 60%, #e6e6e6);
`;

const DateBox = styled.div`
  height: 37px;
  margin-top: 1px;
  display: flex;
  align-items: center;
  padding-left: 10px;
  border: 1px solid #aeaeae;
  border-radius: 3px;
  background: linear-gradient(#f1f1f1, #fff 5px);
`;

const DateButton = styled.div`
  width: 24px;
  height: 35px;
  margin-left: auto;
  display: grid;
  place-items: center;
  border-left: 1px solid #b5b5b5;
  background: linear-gradient(#ececec, #d9d9d9);
`;

const ListWrap = styled.div`
  height: 365px;
  display: flex;
  padding-left: 2px;
`;

const List = styled.div`
  width: 693px;
  height: 362px;
  overflow: hidden;
  display: flex;
  flex-direction: column;
  justify-content: flex-end;
`;

const Task = styled.div`
  flex: none;
  height: 107px;
  padding: 23px 15px;
  border: 1px solid #e0dada;
  background: #f8f8f8;
  ${(p) => p.$on && css`
    height: 109px;
    border: 2px solid #9b5353;
    border-radius: 4px;
    margin: 1px 1px 0 1px;
  `}
`;

const TaskName = styled.div`
  display: flex;
  gap: 10px;
`;

const ListThumb = styled.div`
  width: 10px;
  height: 115px;
  margin: 244px 0 0 3px;
  border-radius: 3px;
  background: #9b5353;
`;

const Result = styled.div`
  height: 65px;
  margin: 2px 2px 0 2px;
  padding: 6px 0 0 12px;
  border-radius: 3px 3px 0 0;
  background: #f1eeeb;
`;

const Command = styled.div`
  height: 33px;
  margin: 0 1px;
  padding: 8px 0 0 11px;
  border-radius: 2px 2px 0 0;
  background: #ddd6d6;
`;

const StatusBar = styled.div`
  height: 30px;
  padding: 5px 4px;
  background: #fff;
`;

const tasks = [
  ['6.', 'Study', '29/02/2019'],
  ['7.', 'Go Home', '29/02/2019'],
  ['8.', 'long lecture', '29/02/2019'],
  ['9.', 'changing', '31/4/2019', true],
];

const DukeCooks = () => (
  <DukeWindow>
    <DukeTitle>
      <ChefIcon size={15} />
      <Text $size={14.5} $track={-0.35} $left={72} $color="#2b2b2b">DukeCooks</Text>
      <DukeControls $gap={8}>
        <svg width="36" height="14" viewBox="0 0 36 14" fill="none" stroke="#2b2b2b"><path d="M0 12h8" strokeWidth="2" /><path d="M26.500 5.500h9v7h-9z" /><path d="M26 6h10" strokeWidth="2" /></svg>
        <CloseButton $h={20} $bg="#c75050"><Cross /></CloseButton>
      </DukeControls>
    </DukeTitle>
    <DukeMenu>
      <Text $size={14.5} $weight={300} $track={-0.3} $color="#888">File</Text>
      <Text $size={14.5} $weight={300} $track={-0.5} $color="#888">Help</Text>
    </DukeMenu>
    <DukeBody>
      <Sidebar>
        {sideIcons.map((Icon, i) => <Icon key={i} size={28} />)}
        <Vertical $size={15.5} $weight={600} $right={6} $bottom={4} $track={0.2}>Dashboard</Vertical>
      </Sidebar>
      <Main>
        <Head>
          <Text $size={35} $line={50} $track={-0.37} $stroke={0.8} $left={-1} $color="#666">Dashboard</Text>
          <Fields>
            <Field $w={200}><Text $size={14.5} $weight={600} $track={-0.38} $line={18} $color="#777">Your Progress</Text><Progress /></Field>
            <Field $w={150}>
              <Text $size={14.5} $weight={600} $track={-0.5} $line={18} $color="#777">Date</Text>
              <DateBox>
                <Text $size={14.5} $stroke={0.3} $track={-0.5}>11/11/2019</Text>
                <DateButton><svg width="9" height="9" viewBox="0 0 9 9"><rect width="9" height="9" fill="#4d4d4d" /><path d="M1 3.500h7M1 5.500h7M1 7.500h7" stroke="#eee" strokeDasharray="1 1" /></svg></DateButton>
              </DateBox>
            </Field>
          </Fields>
        </Head>
        <ListWrap>
          <List>
            {tasks.map(([no, name, date, on]) => (
              <Task key={no} $on={on}>
                <TaskName><Text $size={15} $weight={600}>{no}</Text><Text $size={15} $weight={600} $track={0.15}>{name}</Text></TaskName>
                <Text $size={12.8} $track={-0.22} $line={22}>{date}</Text>
                <Text $size={15} $weight={600} $track={-0.55} $line={16}>NOT COMPLETE</Text>
              </Task>
            ))}
          </List>
          <ListThumb />
        </ListWrap>
        <Result><Text $size={16.5} $weight={300} $line={25} $track={-0.195} $color="#555">Names should only contain alphanumeric characters and spaces, and it should not be blank</Text></Result>
        <Command><Text $size={15} $track={-0.32} $color="#000">edit task 9 tn/changing td/31/4/2019</Text></Command>
      </Main>
    </DukeBody>
    <StatusBar><Text $size={14.5} $weight={300} $track={-0.4} $color="#888">.\data\dashboard.json</Text></StatusBar>
  </DukeWindow>
);

export default function App() {
  return (
    <>
      <Global />
      <Desktop>
        <Catcher />
        <Taskbar />
        <DukeCooks />
      </Desktop>
    </>
  );
}
